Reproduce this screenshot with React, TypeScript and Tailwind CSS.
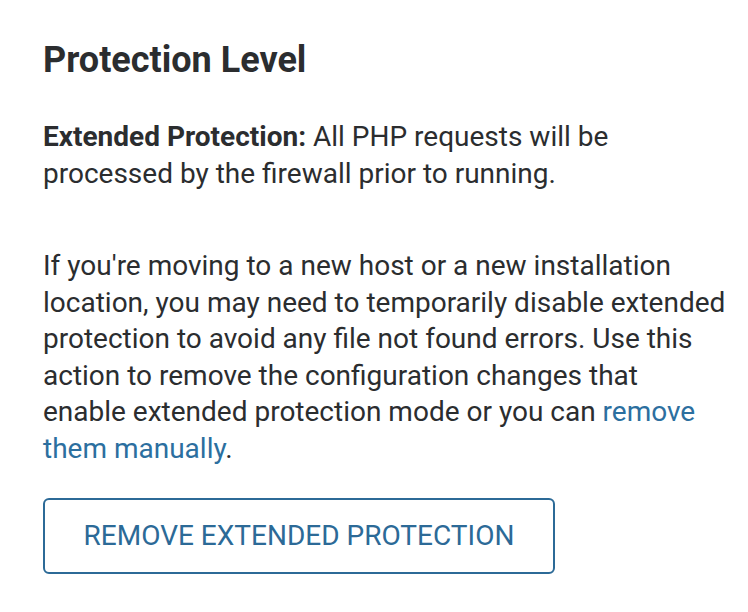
export default function App() {
  return (
    <div
      className="bg-white pl-[43px] pr-[22px] pt-[38px] text-[#2b2d2f]"
      style={{ fontFamily: "Roboto, 'Noto Sans', sans-serif" }}
    >
      <h2 className="text-[36px] font-bold leading-[44px]">Protection Level</h2>
      <p className="mt-[37px] text-[28px] leading-[36.5px]">
        <strong className="font-bold">Extended Protection:</strong> All PHP requests will be
        processed by the firewall prior to running.
      </p>
      <p className="mt-[56px] text-[28px] leading-[36.5px]">
        If you're moving to a new host or a new installation location, you may need to
        temporarily disable extended protection to avoid any file not found errors. Use this
        action to remove the configuration changes that enable extended protection mode or you
        can{" "}
        <a href="#" className="text-[#2c6f9f]">
          remove them manually
        </a>
        .
      </p>
      <button className="mt-[31px] h-[76px] w-[512px] rounded-[6px] border-2 border-[#2c6a97] text-[28px] uppercase text-[#2c6a97]">
        Remove Extended Protection
      </button>
    </div>
  );
}
